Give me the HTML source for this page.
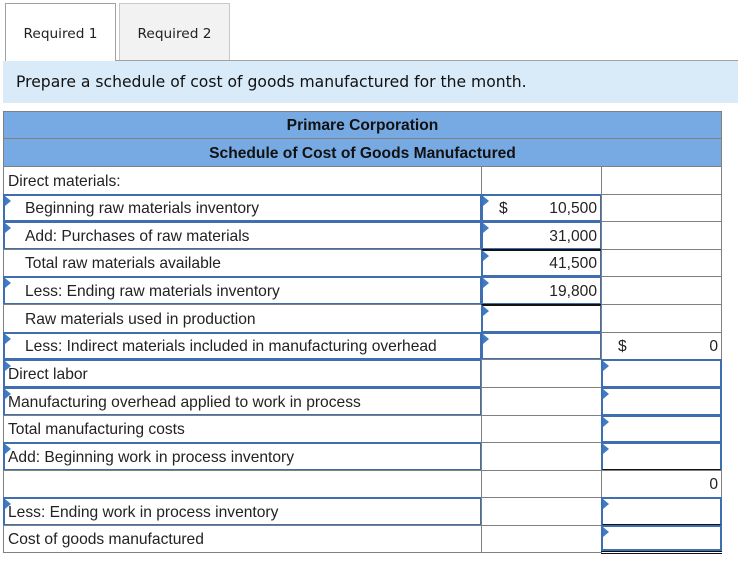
<!DOCTYPE html>
<html><head><meta charset="utf-8"><style>
*{box-sizing:border-box;margin:0;padding:0}
body{width:738px;height:562px;background:#fff;position:relative;overflow:hidden;font-family:"Liberation Sans",Arial,sans-serif;font-size:15.6px;color:#222}
.tab{position:absolute;top:3px;height:58px;border:1px solid #a0a0a0;border-bottom:none;font-family:"DejaVu Sans",sans-serif;font-size:13.7px;text-align:center;line-height:60px}
.band{position:absolute;left:3px;top:61px;width:735px;height:42px;background:#d9eaf8;font-family:"DejaVu Sans",sans-serif;font-size:15.6px;line-height:43px;padding-left:13px;color:#111}
.c{position:absolute;border:1px solid #808080;background:#fff;white-space:nowrap;overflow:hidden}
.in{border:2px solid #3f6fb0}
.h{background:#77aae3;font-weight:bold;text-align:center;color:#111}
.tri{position:absolute;left:0;top:0;width:0;height:0;border-top:5px solid transparent;border-bottom:5px solid transparent;border-left:6px solid #3f7cc8}
.num{position:absolute;right:3px}
</style></head><body>
<div class="tab" style="left:5px;width:111px;background:#fff;height:58px">Required 1</div>
<div class="tab" style="left:119px;width:111px;background:#f2f2f2;height:57px;border-color:#c8c8c8">Required 2</div>
<div style="position:absolute;left:116px;top:60px;width:622px;height:1px;background:#a0a0a0"></div>
<div class="band">Prepare a schedule of cost of goods manufactured for the month.</div>

<div class="c h" style="left:3px;top:111px;width:719px;height:28px;line-height:28px">Primare Corporation</div>
<div class="c h" style="left:3px;top:138px;width:719px;height:29px;line-height:29px">Schedule of Cost of Goods Manufactured</div>

<div class="c" style="left:3px;top:166px;width:479px;height:29px;line-height:29px;padding-left:4px">Direct materials:</div>
<div class="c" style="left:481px;top:166px;width:121px;height:29px"></div>
<div class="c" style="left:601px;top:166px;width:121px;height:29px"></div>

<div class="c in" style="left:3px;top:194px;width:479px;height:28px;line-height:26px;padding-left:20px"><span class="tri"></span>Beginning raw materials inventory</div>
<div class="c in" style="left:481px;top:194px;width:121px;height:28px;line-height:26px"><span class="tri"></span><span style="position:absolute;left:16px">$</span><span class="num">10,500</span></div>
<div class="c" style="left:601px;top:194px;width:121px;height:28px"></div>

<div class="c in" style="left:3px;top:221px;width:479px;height:29px;line-height:27px;padding-left:20px"><span class="tri"></span>Add: Purchases of raw materials</div>
<div class="c in" style="left:481px;top:221px;width:121px;height:29px;line-height:27px"><span class="tri"></span><span class="num">31,000</span></div>
<div class="c" style="left:601px;top:221px;width:121px;height:29px"></div>

<div class="c" style="left:3px;top:249px;width:479px;height:28px;line-height:28px;padding-left:21px">Total raw materials available</div>
<div class="c in" style="left:481px;top:249px;width:121px;height:28px;line-height:26px;border-top-color:#111"><span class="tri"></span><span class="num">41,500</span></div>
<div class="c" style="left:601px;top:249px;width:121px;height:28px"></div>

<div class="c in" style="left:3px;top:276px;width:479px;height:29px;line-height:27px;padding-left:20px"><span class="tri"></span>Less: Ending raw materials inventory</div>
<div class="c in" style="left:481px;top:276px;width:121px;height:29px;line-height:27px"><span class="tri"></span><span class="num">19,800</span></div>
<div class="c" style="left:601px;top:276px;width:121px;height:29px"></div>

<div class="c" style="left:3px;top:304px;width:479px;height:29px;line-height:29px;padding-left:21px">Raw materials used in production</div>
<div class="c in" style="left:481px;top:304px;width:121px;height:29px;border-top-color:#111"><span class="tri"></span></div>
<div class="c" style="left:601px;top:304px;width:121px;height:29px"></div>

<div class="c in" style="left:3px;top:332px;width:479px;height:28px;line-height:26px;padding-left:20px"><span class="tri"></span>Less: Indirect materials included in manufacturing overhead</div>
<div class="c in" style="left:481px;top:332px;width:121px;height:28px"><span class="tri"></span></div>
<div class="c" style="left:601px;top:332px;width:121px;height:28px;line-height:28px"><span style="position:absolute;left:16px">$</span><span class="num">0</span></div>

<div class="c in" style="left:3px;top:359px;width:479px;height:29px;line-height:27px;padding-left:3px"><span class="tri"></span>Direct labor</div>
<div class="c" style="left:481px;top:359px;width:121px;height:29px"></div>
<div class="c in" style="left:601px;top:359px;width:121px;height:29px"><span class="tri"></span></div>

<div class="c in" style="left:3px;top:387px;width:479px;height:29px;line-height:27px;padding-left:3px"><span class="tri"></span>Manufacturing overhead applied to work in process</div>
<div class="c" style="left:481px;top:387px;width:121px;height:29px"></div>
<div class="c in" style="left:601px;top:387px;width:121px;height:29px"><span class="tri"></span></div>

<div class="c" style="left:3px;top:415px;width:479px;height:28px;line-height:28px;padding-left:4px">Total manufacturing costs</div>
<div class="c" style="left:481px;top:415px;width:121px;height:28px"></div>
<div class="c in" style="left:601px;top:415px;width:121px;height:28px"><span class="tri"></span></div>

<div class="c in" style="left:3px;top:442px;width:479px;height:29px;line-height:27px;padding-left:3px"><span class="tri"></span>Add: Beginning work in process inventory</div>
<div class="c" style="left:481px;top:442px;width:121px;height:29px"></div>
<div class="c in" style="left:601px;top:442px;width:121px;height:29px;border-bottom-color:#111"><span class="tri"></span></div>

<div class="c" style="left:3px;top:470px;width:479px;height:28px"></div>
<div class="c" style="left:481px;top:470px;width:121px;height:28px"></div>
<div class="c" style="left:601px;top:470px;width:121px;height:28px;line-height:28px"><span class="num">0</span></div>

<div class="c in" style="left:3px;top:497px;width:479px;height:29px;line-height:27px;padding-left:3px"><span class="tri"></span>Less: Ending work in process inventory</div>
<div class="c" style="left:481px;top:497px;width:121px;height:29px"></div>
<div class="c in" style="left:601px;top:497px;width:121px;height:29px;border-bottom-color:#111"><span class="tri"></span></div>

<div class="c" style="left:3px;top:525px;width:479px;height:28px;line-height:28px;padding-left:4px">Cost of goods manufactured</div>
<div class="c" style="left:481px;top:525px;width:121px;height:28px"></div>
<div class="c in" style="left:601px;top:525px;width:121px;height:26px"><span class="tri"></span></div>
<div style="position:absolute;left:601px;top:551px;width:121px;height:3px;border-top:1px solid #111;border-bottom:1px solid #111"></div>
</body></html>
